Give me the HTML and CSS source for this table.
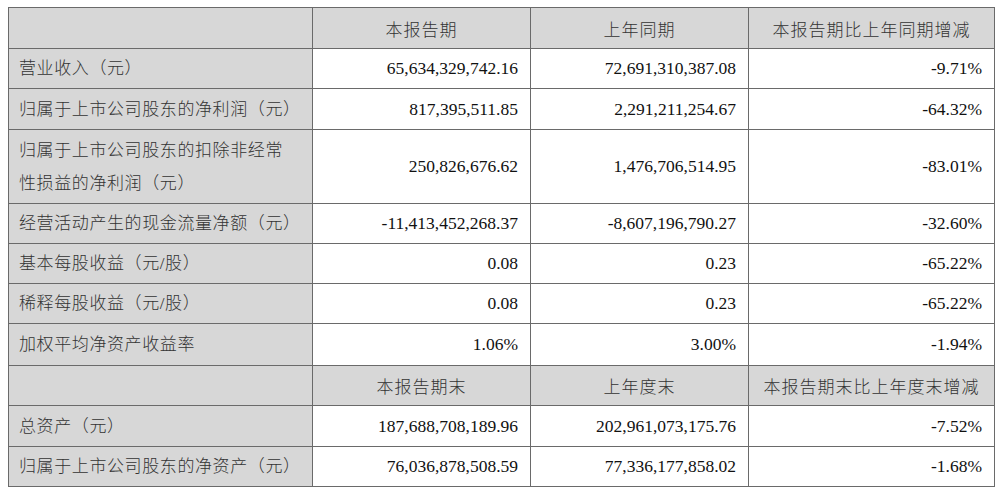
FILE: index.html
```html
<!DOCTYPE html>
<html lang="zh-CN">
<head>
<meta charset="utf-8">
<title>主要会计数据</title>
<link rel="stylesheet" href="styles.css">
</head>
<body>
<table class="fin">
  <colgroup>
    <col class="c-label">
    <col class="c-num">
    <col class="c-num">
    <col class="c-pct">
  </colgroup>
  <tr class="head plus1">
    <th class="label"></th>
    <th>本报告期</th>
    <th>上年同期</th>
    <th>本报告期比上年同期增减</th>
  </tr>
  <tr>
    <td class="label">营业收入（元）</td>
    <td class="num">65,634,329,742.16</td>
    <td class="num">72,691,310,387.08</td>
    <td class="num">-9.71%</td>
  </tr>
  <tr class="plus1">
    <td class="label">归属于上市公司股东的净利润（元）</td>
    <td class="num">817,395,511.85</td>
    <td class="num">2,291,211,254.67</td>
    <td class="num">-64.32%</td>
  </tr>
  <tr class="tall">
    <td class="label">归属于上市公司股东的扣除非经常<br>性损益的净利润（元）</td>
    <td class="num">250,826,676.62</td>
    <td class="num">1,476,706,514.95</td>
    <td class="num">-83.01%</td>
  </tr>
  <tr>
    <td class="label">经营活动产生的现金流量净额（元）</td>
    <td class="num">-11,413,452,268.37</td>
    <td class="num">-8,607,196,790.27</td>
    <td class="num">-32.60%</td>
  </tr>
  <tr>
    <td class="label">基本每股收益（元/股）</td>
    <td class="num">0.08</td>
    <td class="num">0.23</td>
    <td class="num">-65.22%</td>
  </tr>
  <tr>
    <td class="label">稀释每股收益（元/股）</td>
    <td class="num">0.08</td>
    <td class="num">0.23</td>
    <td class="num">-65.22%</td>
  </tr>
  <tr class="plus2">
    <td class="label">加权平均净资产收益率</td>
    <td class="num">1.06%</td>
    <td class="num">3.00%</td>
    <td class="num">-1.94%</td>
  </tr>
  <tr class="head">
    <th class="label"></th>
    <th>本报告期末</th>
    <th>上年度末</th>
    <th>本报告期末比上年度末增减</th>
  </tr>
  <tr class="plus1">
    <td class="label">总资产（元）</td>
    <td class="num">187,688,708,189.96</td>
    <td class="num">202,961,073,175.76</td>
    <td class="num">-7.52%</td>
  </tr>
  <tr>
    <td class="label">归属于上市公司股东的净资产（元）</td>
    <td class="num">76,036,878,508.59</td>
    <td class="num">77,336,177,858.02</td>
    <td class="num">-1.68%</td>
  </tr>
</table>
</body>
</html>
```
FILE: styles.css
```css
html, body {
  margin: 0;
  padding: 0;
  background: #ffffff;
}

body {
  padding: 7px 0 0 8px;
}

.fin {
  border-collapse: collapse;
  table-layout: fixed;
  width: 986px;
  font-family: "Liberation Serif", "Noto Sans CJK SC", serif;
  color: #222;
}

.c-label { width: 304px; }
.c-num { width: 218px; }
.c-pct { width: 246px; }

.fin th,
.fin td {
  border: 1px solid #6a6a6a;
  height: 33px;
  line-height: 33px;
  padding: 3px 12px 3px 10px;
  white-space: nowrap;
  vertical-align: middle;
}

.fin tr.plus1 th,
.fin tr.plus1 td {
  height: 34px;
}

.fin tr.plus2 td {
  height: 35px;
}

.fin tr.tall td {
  height: 67px;
}

.fin th {
  background: #d7d7d7;
  font-family: "Noto Sans CJK SC", sans-serif;
  font-weight: 300;
  font-size: 17px;
  letter-spacing: 1px;
  color: #333;
  text-align: center;
  padding-left: 4px;
  padding-right: 4px;
}

.fin .label {
  background: #d7d7d7;
  font-family: "Liberation Serif", "Noto Sans CJK SC", serif;
  font-weight: 300;
  font-size: 17px;
  letter-spacing: 0.6px;
  color: #333;
  text-align: left;
  padding-left: 10px;
}

.fin .num {
  font-size: 17.5px;
  text-align: right;
  color: #111;
}
```
